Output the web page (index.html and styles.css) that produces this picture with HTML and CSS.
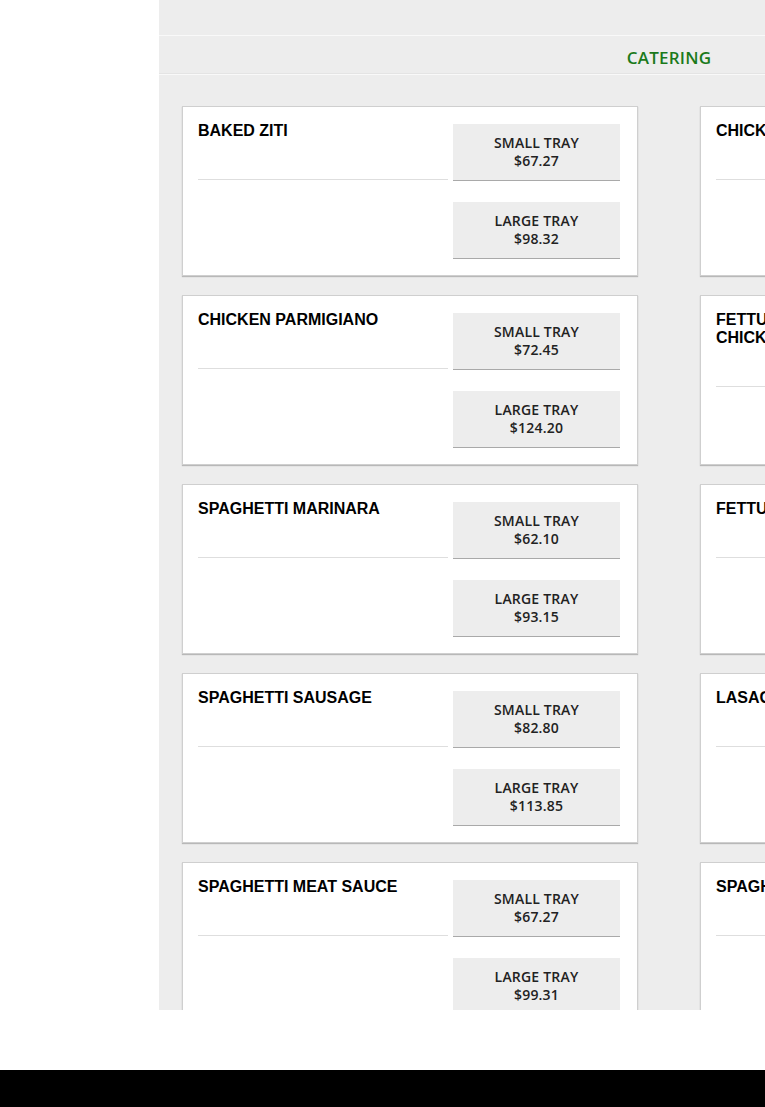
FILE: index.html
```html
<!DOCTYPE html>
<html>
<head>
<meta charset="utf-8">
<link rel="stylesheet" href="styles.css">
</head>
<body>
<div class="page">
  <aside class="sidebar"></aside>
  <main class="main">
    <div class="topbar"></div>
    <nav class="nav"><span class="nav-item">CATERING</span></nav>
    <div class="grid">
      <div class="card"><div class="info"><h3 class="title">BAKED ZITI</h3></div><div class="opts"><div class="opt">SMALL TRAY<br>$67.27</div><div class="opt">LARGE TRAY<br>$98.32</div></div></div>
      <div class="card"><div class="info"><h3 class="title">CHICKEN FRANCESE</h3></div><div class="opts"><div class="opt">SMALL TRAY<br>$77.62</div><div class="opt">LARGE TRAY<br>$129.38</div></div></div>
      <div class="card"><div class="info"><h3 class="title">CHICKEN PARMIGIANO</h3></div><div class="opts"><div class="opt">SMALL TRAY<br>$72.45</div><div class="opt">LARGE TRAY<br>$124.20</div></div></div>
      <div class="card"><div class="info"><h3 class="title">FETTUCCINE ALFREDO WITH CHICKEN</h3></div><div class="opts"><div class="opt">SMALL TRAY<br>$82.80</div><div class="opt">LARGE TRAY<br>$129.38</div></div></div>
      <div class="card"><div class="info"><h3 class="title">SPAGHETTI MARINARA</h3></div><div class="opts"><div class="opt">SMALL TRAY<br>$62.10</div><div class="opt">LARGE TRAY<br>$93.15</div></div></div>
      <div class="card"><div class="info"><h3 class="title">FETTUCCINE ALFREDO</h3></div><div class="opts"><div class="opt">SMALL TRAY<br>$72.45</div><div class="opt">LARGE TRAY<br>$108.68</div></div></div>
      <div class="card"><div class="info"><h3 class="title">SPAGHETTI SAUSAGE</h3></div><div class="opts"><div class="opt">SMALL TRAY<br>$82.80</div><div class="opt">LARGE TRAY<br>$113.85</div></div></div>
      <div class="card"><div class="info"><h3 class="title">LASAGNA</h3></div><div class="opts"><div class="opt">SMALL TRAY<br>$82.80</div><div class="opt">LARGE TRAY<br>$124.20</div></div></div>
      <div class="card"><div class="info"><h3 class="title">SPAGHETTI MEAT SAUCE</h3></div><div class="opts"><div class="opt">SMALL TRAY<br>$67.27</div><div class="opt">LARGE TRAY<br>$99.31</div></div></div>
      <div class="card"><div class="info"><h3 class="title">SPAGHETTI MEATBALLS</h3></div><div class="opts"><div class="opt">SMALL TRAY<br>$77.62</div><div class="opt">LARGE TRAY<br>$113.85</div></div></div>
    </div>
  </main>
</div>
<div class="gap"></div>
<footer class="footer"></footer>
</body>
</html>
```

FILE: styles.css
```css
html, body {
  margin: 0;
  padding: 0;
  background: #fff;
  overflow-x: hidden;
}
body {
  font-family: "Open Sans", "Noto Sans", sans-serif;
  width: 765px;
}
.page {
  display: flex;
  height: 1010px;
  overflow: hidden;
  width: 1180px;
}
.sidebar {
  width: 159px;
  flex: none;
  background: #fff;
}
.main {
  width: 1020px;
  flex: none;
  background: #ededed;
  display: flex;
  flex-direction: column;
}
.topbar {
  height: 35px;
  flex: none;
}
.nav {
  flex: none;
  height: 38px;
  border-top: 1px solid #f9f9f9;
  border-bottom: 1px solid #f9f9f9;
  box-shadow: 0 -1px 0 #e4e4e4 inset;
  display: flex;
  justify-content: center;
  align-items: center;
}
.nav-item {
  color: #1b7a1b;
  font-size: 17px;
  font-weight: 600;
  letter-spacing: 0.2px;
  margin-top: 4px;
}
.grid {
  display: grid;
  grid-template-columns: 456px 456px;
  column-gap: 62px;
  row-gap: 19px;
  padding: 31px 23px 0 23px;
}
.card {
  background: #fff;
  border: 1px solid #cfcfcf;
  box-shadow: 0 1px 1px #b8b8b8;
  display: flex;
  padding: 17px 17px 16px 15px;
  gap: 5px;
  height: 170px;
  box-sizing: border-box;
}
.info {
  width: 250px;
  flex: none;
  align-self: flex-start;
  border-bottom: 1px solid #dedede;
  padding-bottom: 39px;
  margin-top: -2px;
}
.title {
  margin: 0;
  font-family: "Liberation Sans", Arial, sans-serif;
  font-size: 16px;
  line-height: 18px;
  font-weight: bold;
  color: #000;
}
.opts {
  width: 167px;
  display: flex;
  flex-direction: column;
  gap: 21px;
}
.opt {
  background: #ededed;
  border-bottom: 1px solid #a9a9a9;
  padding: 10px 0;
  text-align: center;
  font-size: 14px;
  line-height: 18px;
  color: #222;
  letter-spacing: 0.2px;
  font-weight: 600;
}
.gap {
  height: 60px;
}
.footer {
  height: 37px;
  background: #000;
}
```
